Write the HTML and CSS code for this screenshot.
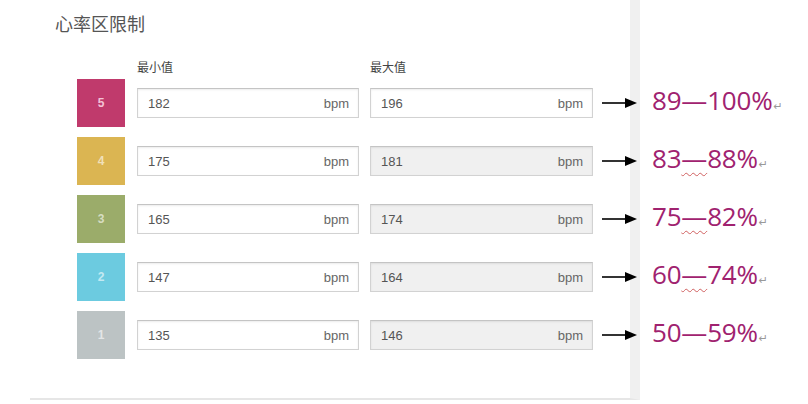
FILE: index.html
```html
<!DOCTYPE html>
<html lang="zh">
<head>
<meta charset="utf-8">
<title>心率区限制</title>
<link rel="stylesheet" href="styles.css">
</head>
<body>
<div class="page">
  <section class="panel">
    <h1 class="title">心率区限制</h1>
    <div class="zones">
      <div class="labels">
        <span class="label-spacer"></span>
        <span class="label label-min">最小值</span>
        <span class="label">最大值</span>
      </div>

      <div class="row">
        <div class="swatch z5">5</div>
        <div class="field field-min"><span>182</span><span class="unit">bpm</span></div>
        <div class="field field-max"><span>196</span><span class="unit">bpm</span></div>
        <svg class="arrow" viewBox="0 0 35 12" width="35" height="12"><line x1="0" y1="6" x2="25" y2="6" stroke="#000" stroke-width="1.6"/><polygon points="23,1 35,6 23,11" fill="#000"/></svg>
        <div class="pct">89—100%<span class="ret">↵</span></div>
      </div>

      <div class="row">
        <div class="swatch z4">4</div>
        <div class="field field-min"><span>175</span><span class="unit">bpm</span></div>
        <div class="field field-max disabled"><span>181</span><span class="unit">bpm</span></div>
        <svg class="arrow" viewBox="0 0 35 12" width="35" height="12"><line x1="0" y1="6" x2="25" y2="6" stroke="#000" stroke-width="1.6"/><polygon points="23,1 35,6 23,11" fill="#000"/></svg>
        <div class="pct">83<span class="wavy">—</span>88%<span class="ret">↵</span></div>
      </div>

      <div class="row">
        <div class="swatch z3">3</div>
        <div class="field field-min"><span>165</span><span class="unit">bpm</span></div>
        <div class="field field-max disabled"><span>174</span><span class="unit">bpm</span></div>
        <svg class="arrow" viewBox="0 0 35 12" width="35" height="12"><line x1="0" y1="6" x2="25" y2="6" stroke="#000" stroke-width="1.6"/><polygon points="23,1 35,6 23,11" fill="#000"/></svg>
        <div class="pct">75<span class="wavy">—</span>82%<span class="ret">↵</span></div>
      </div>

      <div class="row">
        <div class="swatch z2">2</div>
        <div class="field field-min"><span>147</span><span class="unit">bpm</span></div>
        <div class="field field-max disabled"><span>164</span><span class="unit">bpm</span></div>
        <svg class="arrow" viewBox="0 0 35 12" width="35" height="12"><line x1="0" y1="6" x2="25" y2="6" stroke="#000" stroke-width="1.6"/><polygon points="23,1 35,6 23,11" fill="#000"/></svg>
        <div class="pct">60<span class="wavy">—</span>74%<span class="ret">↵</span></div>
      </div>

      <div class="row">
        <div class="swatch z1">1</div>
        <div class="field field-min"><span>135</span><span class="unit">bpm</span></div>
        <div class="field field-max disabled"><span>146</span><span class="unit">bpm</span></div>
        <svg class="arrow" viewBox="0 0 35 12" width="35" height="12"><line x1="0" y1="6" x2="25" y2="6" stroke="#000" stroke-width="1.6"/><polygon points="23,1 35,6 23,11" fill="#000"/></svg>
        <div class="pct">50—59%<span class="ret">↵</span></div>
      </div>
    </div>
  </section>
</div>
</body>
</html>
```

FILE: styles.css
```css
* { box-sizing: border-box; }

html, body {
  margin: 0;
  padding: 0;
  background: #ffffff;
}

body {
  font-family: "Liberation Sans", "Noto Sans CJK SC", sans-serif;
  color: #555;
}

.page {
  padding-left: 30px;
  width: 808px;
  height: 404px;
  overflow: hidden;
}

.panel {
  width: 610px;
  padding: 11px 0 39px 25px;
  border-right: 10px solid #f0f0f0;
  border-bottom: 2px solid #e6e6e6;
  background: #fff;
}

.title {
  margin: 0;
  font-family: "Noto Sans CJK SC", sans-serif;
  font-weight: 400;
  font-size: 18px;
  line-height: 24px;
  color: #555;
}

.zones {
  margin-left: 22px;
  margin-top: 24px;
  display: flex;
  flex-direction: column;
  gap: 10px;
}

.labels {
  display: flex;
  height: 16px;
  margin-bottom: -6px;
  font-family: "Noto Sans CJK SC", sans-serif;
  font-size: 12px;
  line-height: 16px;
  color: #444;
}

.label-spacer { flex: none; width: 60px; }
.label { flex: none; }
.label-min { width: 233px; }

.row {
  display: flex;
  align-items: center;
  height: 48px;
  width: max-content;
}

.swatch {
  flex: none;
  width: 48px;
  height: 48px;
  display: flex;
  align-items: center;
  justify-content: center;
  font-size: 12px;
  font-weight: 700;
  color: rgba(255, 255, 255, 0.6);
}

.z5 { background: #c03a6c; color: #f3c2d6; }
.z4 { background: #dbb552; }
.z3 { background: #9bac6a; }
.z2 { background: #6ccbe0; }
.z1 { background: #bcc3c4; }

.field {
  flex: none;
  height: 30px;
  display: flex;
  align-items: center;
  justify-content: space-between;
  padding: 0 9px 0 10px;
  border: 1px solid #d2d2d2;
  border-top-color: #c4c4c4;
  box-shadow: inset 0 1px 2px rgba(0, 0, 0, 0.08);
  background: #fff;
  font-size: 13px;
  color: #555;
}

.field-min { width: 222px; margin-left: 12px; }
.field-max { width: 223px; margin-left: 11px; }
.field.disabled { background: #f0f0f0; }

.unit { color: #666; }

.arrow {
  flex: none;
  margin-left: 9px;
  display: block;
}

.pct {
  flex: none;
  margin-left: 15px;
  font-family: "Open Sans", "Noto Sans", sans-serif;
  font-size: 26px;
  line-height: 30px;
  color: #a0226f;
  letter-spacing: -0.2px;
}

.wavy {
  text-decoration: underline wavy #d06060;
  text-decoration-thickness: 1px;
  text-underline-offset: 4px;
}

.ret {
  font-family: "DejaVu Sans", sans-serif;
  font-size: 11px;
  color: #999;
  margin-left: 1px;
}
```
